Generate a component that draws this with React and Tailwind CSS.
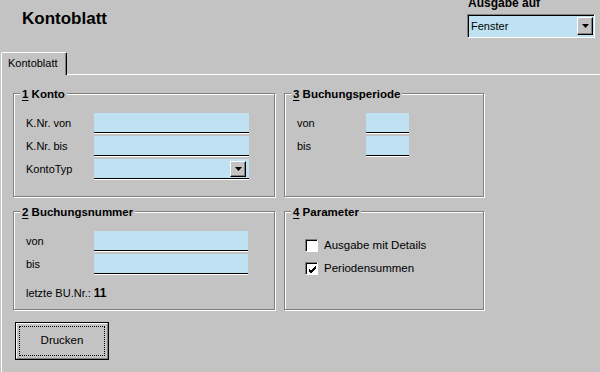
import React from 'react'

const BG = 'bg-[#c3c3c3]'

function Field({ w = 'w-[155px]', children }) {
  return (
    <div className={`${w} h-[21px] bg-[#bfe1f2] shadow-[inset_0_-1px_0_#fff,inset_0_-2px_0_#000] relative`}>
      {children}
    </div>
  )
}

function Arrow() {
  return (
    <svg width="7" height="4" viewBox="0 0 7 4">
      <path d="M0 0h7L3.5 4z" fill="#000" />
    </svg>
  )
}

function DropButton({ className = '' }) {
  return (
    <div className={`absolute flex items-center justify-center bg-[#c3c3c3] border-t border-l border-white border-r border-b border-r-black border-b-black shadow-[inset_-1px_-1px_0_#808080] ${className}`}>
      <Arrow />
    </div>
  )
}

function Group({ num, title, children, className = '' }) {
  return (
    <div className={`relative border border-[#808080] shadow-[inset_1px_1px_0_#fff,1px_1px_0_#fff] ${className}`}>
      <div className={`absolute -top-[7px] left-[6px] px-[2px] ${BG} text-[11.5px] font-bold leading-[14px]`}>
        <span className="underline underline-offset-2">{num}</span> {title}
      </div>
      {children}
    </div>
  )
}

function Row({ label, labelW = 'w-[68px]', children }) {
  return (
    <div className="flex items-center h-[21px]">
      <span className={`${labelW} text-[11px]`}>{label}</span>
      {children}
    </div>
  )
}

function Checkbox({ checked, label }) {
  return (
    <div className="flex items-center h-[21px]">
      <div className="w-[13px] h-[13px] bg-white border border-t-[#808080] border-l-[#808080] border-r-white border-b-white shadow-[inset_1px_1px_0_#000] flex items-center justify-center">
        {checked && (
          <svg width="9" height="9" viewBox="0 0 9 9" className="ml-[1px] mt-[1px]">
            <path d="M1 4l2 2 5-5M1 5l2 2 5-5M1 6l2 2 5-5" stroke="#000" strokeWidth="1" fill="none" />
          </svg>
        )}
      </div>
      <span className="ml-[6px] text-[11.5px]">{label}</span>
    </div>
  )
}

export default function App() {
  return (
    <div className={`w-[600px] h-[372px] overflow-hidden ${BG} text-black font-['Liberation_Sans',Arial,sans-serif] select-none`}>
      {/* header */}
      <div className="flex h-[52px]">
        <h1 className="pl-[22px] pt-[9px] text-[17px] font-bold leading-[20px]">Kontoblatt</h1>
        <div className="ml-auto mr-[5px] w-[128px]">
          <div className="-mt-[4px] pl-[1px] text-[12px] font-bold leading-[14px]">Ausgabe auf</div>
          <div className="relative mt-[4px] h-[24px] bg-[#bfe1f2] border-t border-l border-[#808080] border-r border-b border-r-white border-b-white shadow-[inset_1px_1px_0_#000]">
            <span className="absolute left-[3px] top-[4px] text-[11px] leading-[14px]">Fenster</span>
            <DropButton className="right-[1px] top-[2px] w-[16px] h-[18px]" />
          </div>
        </div>
      </div>

      {/* tab strip */}
      <div className="flex h-[23px]">
        <div className="ml-[1px] w-[66px] h-[23px] border-t border-l border-white border-r border-r-black rounded-t-[2px] shadow-[inset_-1px_0_0_#808080] pl-[6px] pt-[2px] text-[11px] leading-[16px]">
          Kontoblatt
        </div>
        <div className="flex-1 border-b border-white" />
      </div>

      {/* tab panel */}
      <div className="ml-[1px] h-full border-l border-white pl-[11px] pt-[18px]">
        <div className="grid grid-cols-[262px_200px] grid-rows-[104px_99px] gap-x-[9px] gap-y-[14px]">
          <Group num="1" title="Konto" className="pt-[19px] pl-[12px]">
            <div className="flex flex-col gap-[2px]">
              <Row label="K.Nr. von"><Field /></Row>
              <Row label="K.Nr. bis"><Field /></Row>
              <Row label="KontoTyp">
                <Field>
                  <DropButton className="right-[3px] top-[2px] w-[16px] h-[16px]" />
                </Field>
              </Row>
            </div>
          </Group>

          <Group num="3" title="Buchungsperiode" className="pt-[19px] pl-[12px]">
            <div className="flex flex-col gap-[2px]">
              <Row label="von" labelW="w-[69px]"><Field w="w-[43px]" /></Row>
              <Row label="bis" labelW="w-[69px]"><Field w="w-[43px]" /></Row>
            </div>
          </Group>

          <Group num="2" title="Buchungsnummer" className="pt-[19px] pl-[12px]">
            <div className="flex flex-col gap-[2px]">
              <Row label="von"><Field w="w-[154px]" /></Row>
              <Row label="bis"><Field w="w-[154px]" /></Row>
            </div>
            <div className="mt-[11px] text-[11px] leading-[14px]">
              letzte BU.Nr.: <span className="text-[12px] font-bold">11</span>
            </div>
          </Group>

          <Group num="4" title="Parameter" className="pt-[23px] pl-[20px]">
            <div className="flex flex-col gap-[2px]">
              <Checkbox label="Ausgabe mit Details" />
              <Checkbox checked label="Periodensummen" />
            </div>
          </Group>
        </div>

        <button className="mt-[12px] ml-[2px] w-[94px] h-[38px] border border-black bg-[#c3c3c3] p-0 block">
          <div className="h-full border-t border-l border-white border-r border-b border-r-[#808080] border-b-[#808080] p-[2px]">
            <div className="h-full border border-dotted border-black flex items-center justify-center text-[11.5px]">
              Drucken
            </div>
          </div>
        </button>
      </div>
    </div>
  )
}
